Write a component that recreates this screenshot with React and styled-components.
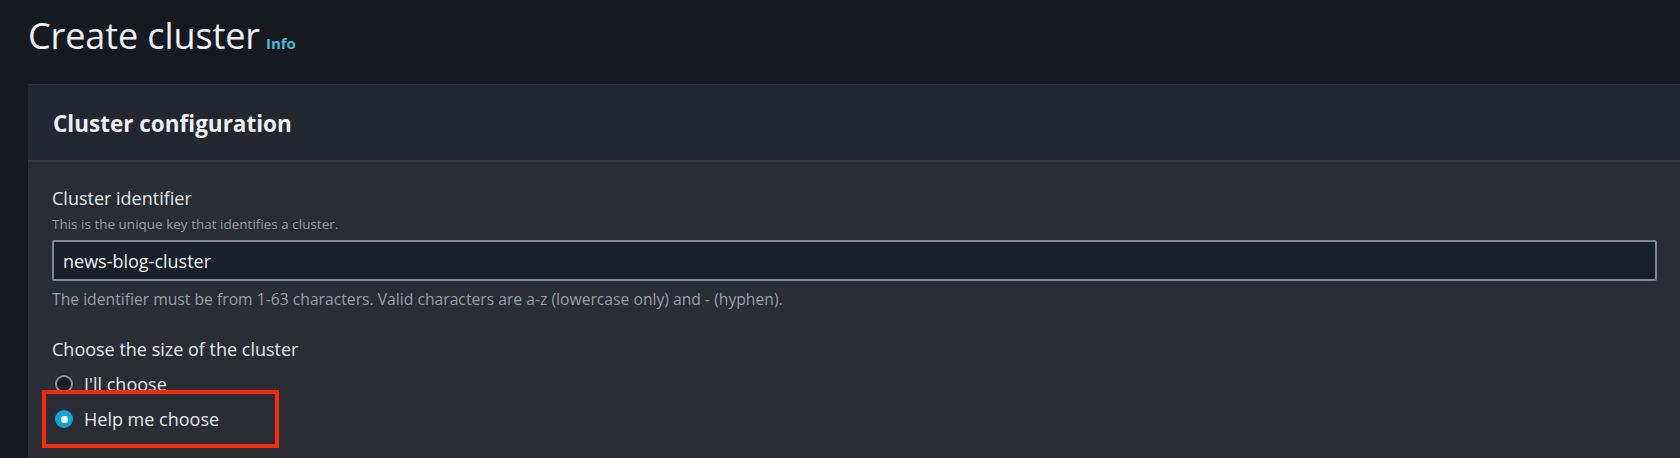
import React from "react";
import styled, { createGlobalStyle } from "styled-components";

const Global = createGlobalStyle`
  html, body { margin: 0; padding: 0; background: #16191f; }
  body { font-family: "Open Sans", "Noto Sans", sans-serif; color: #e9ebed; overflow: hidden; }
`;

const Page = styled.div`
  width: 1680px;
  height: 458px;
  background: #16191f;
  padding-left: 28px;
  box-sizing: border-box;
  overflow: hidden;
`;

const TitleRow = styled.div`
  display: flex;
  align-items: baseline;
  gap: 6px;
  height: 84px;
  padding-top: 10px;
  box-sizing: border-box;
`;

const Title = styled.h1`
  margin: 0;
  font-size: 36px;
  font-weight: 400;
  line-height: 52px;
  color: #eef0f2;
  letter-spacing: -0.1px;
`;

const InfoLink = styled.span`
  font-size: 15px;
  font-weight: 700;
  color: #44b9d6;
`;

const Panel = styled.section`
  width: 1680px;
  border-top: 1px solid #2e3239;
`;

const PanelHeader = styled.div`
  height: 77px;
  background: #232730;
  border-bottom: 2px solid #353a42;
  display: flex;
  align-items: center;
  padding-left: 25px;
  box-sizing: border-box;
`;

const PanelTitle = styled.h2`
  margin: 0;
  font-size: 22.5px;
  font-weight: 700;
  color: #eef0f2;
  padding-top: 2px;
`;

const PanelBody = styled.div`
  background: #2a2d33;
  padding: 24px 24px 0 24px;
  height: 300px;
`;

const Field = styled.div`
  display: flex;
  flex-direction: column;
  margin-bottom: ${(p) => p.$gap || 0}px;
`;

const Label = styled.div`
  font-size: 18px;
  line-height: 24px;
  color: #e4e7ea;
`;

const Description = styled.div`
  font-size: ${(p) => p.$size || 13.5}px;
  line-height: ${(p) => p.$lh || 20}px;
  color: #959fab;
  margin-top: ${(p) => p.$top || 0}px;
`;

const Input = styled.div`
  width: 1605px;
  height: 41px;
  box-sizing: border-box;
  margin-top: 6px;
  background: #1b1f28;
  border: 2px solid #7d8892;
  border-radius: 2px;
  display: flex;
  align-items: center;
  padding-left: 9px;
  font-size: 18px;
  font-weight: 500;
  color: #f0f2f4;
`;

const RadioList = styled.div`
  display: flex;
  flex-direction: column;
  margin-top: 10px;
`;

const RadioRow = styled.div`
  display: flex;
  align-items: center;
  gap: 11px;
  height: 26px;
  font-size: 18px;
  color: #e4e7ea;
  padding-left: 3px;
`;

const Circle = styled.span`
  width: 18px;
  height: 18px;
  border-radius: 50%;
  box-sizing: border-box;
  display: flex;
  align-items: center;
  justify-content: center;
  background: ${(p) => (p.$checked ? "#0ea5d3" : "#1b1f28")};
  border: 2px solid ${(p) => (p.$checked ? "#0ea5d3" : "#8b949c")};
`;

const Dot = styled.span`
  width: 7px;
  height: 7px;
  border-radius: 50%;
  background: #ffffff;
`;

const Highlight = styled.div`
  margin-left: -10px;
  margin-top: -7px;
  width: 237px;
  height: 58px;
  border: 4px solid #f52a0c;
  box-sizing: border-box;
  display: flex;
  align-items: center;
  padding-left: 6px;
`;

export default function App() {
  return (
    <>
      <Global />
      <Page>
        <TitleRow>
          <Title>Create cluster</Title>
          <InfoLink>Info</InfoLink>
        </TitleRow>
        <Panel>
          <PanelHeader>
            <PanelTitle>Cluster configuration</PanelTitle>
          </PanelHeader>
          <PanelBody>
            <Field $gap={27}>
              <Label>Cluster identifier</Label>
              <Description $top={4}>This is the unique key that identifies a cluster.</Description>
              <Input>news-blog-cluster</Input>
              <Description $top={7} $size={15.7} $lh={22}>
                The identifier must be from 1-63 characters. Valid characters are a-z (lowercase only) and - (hyphen).
              </Description>
            </Field>
            <Field>
              <Label>Choose the size of the cluster</Label>
              <RadioList>
                <RadioRow>
                  <Circle />
                  I'll choose
                </RadioRow>
                <Highlight>
                  <RadioRow>
                    <Circle $checked>
                      <Dot />
                    </Circle>
                    Help me choose
                  </RadioRow>
                </Highlight>
              </RadioList>
            </Field>
          </PanelBody>
        </Panel>
      </Page>
    </>
  );
}
